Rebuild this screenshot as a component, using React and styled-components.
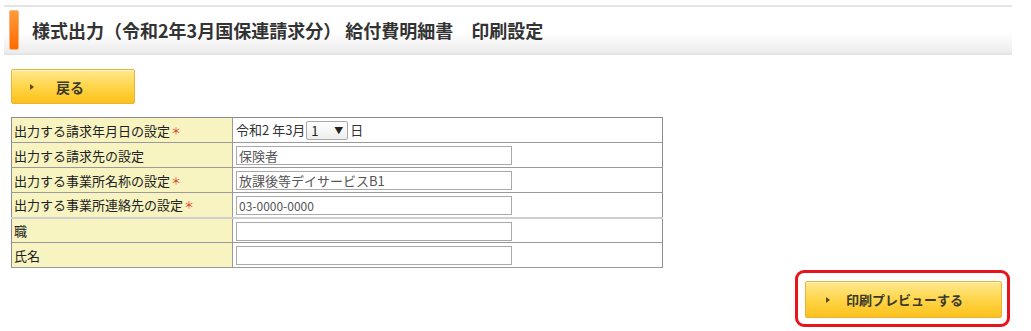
import React from "react";
import styled, { createGlobalStyle } from "styled-components";

const GlobalStyle = createGlobalStyle`
    body {
        margin: 0;
        background: #ffffff;
        font-family: "Noto Sans CJK JP", "Liberation Sans", sans-serif;
        color: #333333;
    }
`;

//whole page
const Page = styled.div`
    width: 1031px;
    padding: 5px 19px 0 4px;
    box-sizing: border-box;
`;

//title bar at the top
const Header = styled.div`
    display: flex;
    align-items: center;
    height: 50px;
    border-top: 2px solid #e4e4e4;
    border-bottom: 2px solid #e4e4e4;
    background: linear-gradient(to bottom, #ffffff 0%, #ffffff 55%, #ececec 100%);
    box-sizing: border-box;
`;

//orange marker left of the title
const Marker = styled.span`
    width: 8px;
    height: 38px;
    margin-left: 5px;
    border: 1px solid #ffb27a;
    border-radius: 2px;
    background: linear-gradient(to bottom, #ff9a3c, #ff6a00);
`;

const Title = styled.h1`
    margin: 0 0 0 13px;
    font-size: 18px;
    font-weight: bold;
    color: #333333;
    white-space: pre;
`;

const Body = styled.div`
    padding-left: 7px;
`;

//yellow gradient button
const YellowButton = styled.button`
    display: flex;
    align-items: center;
    width: ${(p) => p.$width}px;
    height: ${(p) => p.$height}px;
    padding: 0 0 0 ${(p) => p.$pad}px;
    border: 1px solid #e6b43a;
    border-radius: 2px;
    background: linear-gradient(to bottom, #ffe98f 0%, #ffd54a 50%, #fcc11b 100%);
    box-shadow: inset 0 1px 0 #fff3c0;
    font-family: "Noto Sans CJK JP", sans-serif;
    font-size: ${(p) => p.$size}px;
    font-weight: bold;
    color: #3a3a2a;
    cursor: pointer;
    box-sizing: border-box;
`;

const Arrow = styled.span`
    width: 0;
    height: 0;
    margin-right: ${(p) => p.$gap}px;
    border-top: 3px solid transparent;
    border-bottom: 3px solid transparent;
    border-left: 4px solid #5a4a20;
`;

const BackRow = styled.div`
    margin-top: 14px;
`;

//settings table
const Table = styled.table`
    margin-top: 13px;
    width: 652px;
    border-collapse: collapse;
    border: 1px solid #8c8c8c;
    font-size: 13px;
`;

const Row = styled.tr`
    height: 25px;
    border-bottom: ${(p) => (p.$thick ? "2px solid #cfcfcf" : "1px solid #9a9a9a")};
`;

const Label = styled.td`
    width: 216px;
    padding: 0 2px;
    background: #f7f4c1;
    border-right: 1px solid #9a9a9a;
    color: #222222;
    white-space: nowrap;
`;

const Required = styled.span`
    margin-left: 1px;
    font-size: 10px;
    color: #e0302a;
    vertical-align: 1px;
`;

const Value = styled.td`
    padding: 0 3px;
    color: #333333;
    white-space: nowrap;
`;

const TextInput = styled.input`
    width: 276px;
    height: 19px;
    padding: 0 2px;
    border: 1px solid #a9a9a9;
    box-sizing: border-box;
    font-family: "Noto Sans CJK JP", sans-serif;
    font-size: ${(p) => (p.$small ? 12 : 13)}px;
    color: #555555;
    vertical-align: middle;
    &:focus {
        outline: none;
    }
`;

const Select = styled.span`
    display: inline-flex;
    align-items: center;
    justify-content: space-between;
    width: 42px;
    height: 19px;
    margin: 0 2px 0 1px;
    padding: 0 4px;
    border: 1px solid #a9a9a9;
    border-radius: 2px;
    background: linear-gradient(to bottom, #ffffff, #eeeeee);
    box-sizing: border-box;
    vertical-align: middle;
    font-size: 13px;
    color: #222222;
`;

const Caret = styled.span`
    font-size: 9px;
    color: #222222;
`;

const Footer = styled.div`
    display: flex;
    justify-content: flex-end;
    margin-top: 2px;
    padding-right: 2px;
`;

//red highlight around the preview button
const Highlight = styled.div`
    padding: 8px 5px 6px 7px;
    border: 3px solid #e8131b;
    border-radius: 9px;
`;

const rows = [
    { label: "出力する請求先の設定", value: "保険者" },
    { label: "出力する事業所名称の設定", req: true, value: "放課後等デイサービスB1" },
    { label: "出力する事業所連絡先の設定", req: true, value: "03-0000-0000", small: true, thick: true },
    { label: "職", value: "" },
    { label: "氏名", value: "" },
];

const App = () => {
    return (
        <Page>
            <GlobalStyle />
            <Header>
                <Marker />
                <Title>様式出力（令和2年3月国保連請求分） 給付費明細書　印刷設定</Title>
            </Header>
            <Body>
                <BackRow>
                    <YellowButton $width={124} $height={35} $pad={18} $size={14}>
                        <Arrow $gap={22} />
                        戻る
                    </YellowButton>
                </BackRow>
                <Table>
                    <tbody>
                        <Row>
                            <Label>
                                出力する請求年月日の設定<Required>＊</Required>
                            </Label>
                            <Value>
                                令和2 年3月
                                <Select>
                                    1<Caret>▼</Caret>
                                </Select>
                                日
                            </Value>
                        </Row>
                        {rows.map((r) => (
                            <Row key={r.label} $thick={r.thick}>
                                <Label>
                                    {r.label}
                                    {r.req ? <Required>＊</Required> : null}
                                </Label>
                                <Value>
                                    <TextInput defaultValue={r.value} $small={r.small} />
                                </Value>
                            </Row>
                        ))}
                    </tbody>
                </Table>
                <Footer>
                    <Highlight>
                        <YellowButton $width={197} $height={37} $pad={20} $size={13}>
                            <Arrow $gap={16} />
                            印刷プレビューする
                        </YellowButton>
                    </Highlight>
                </Footer>
            </Body>
        </Page>
    );
};

export default App;
